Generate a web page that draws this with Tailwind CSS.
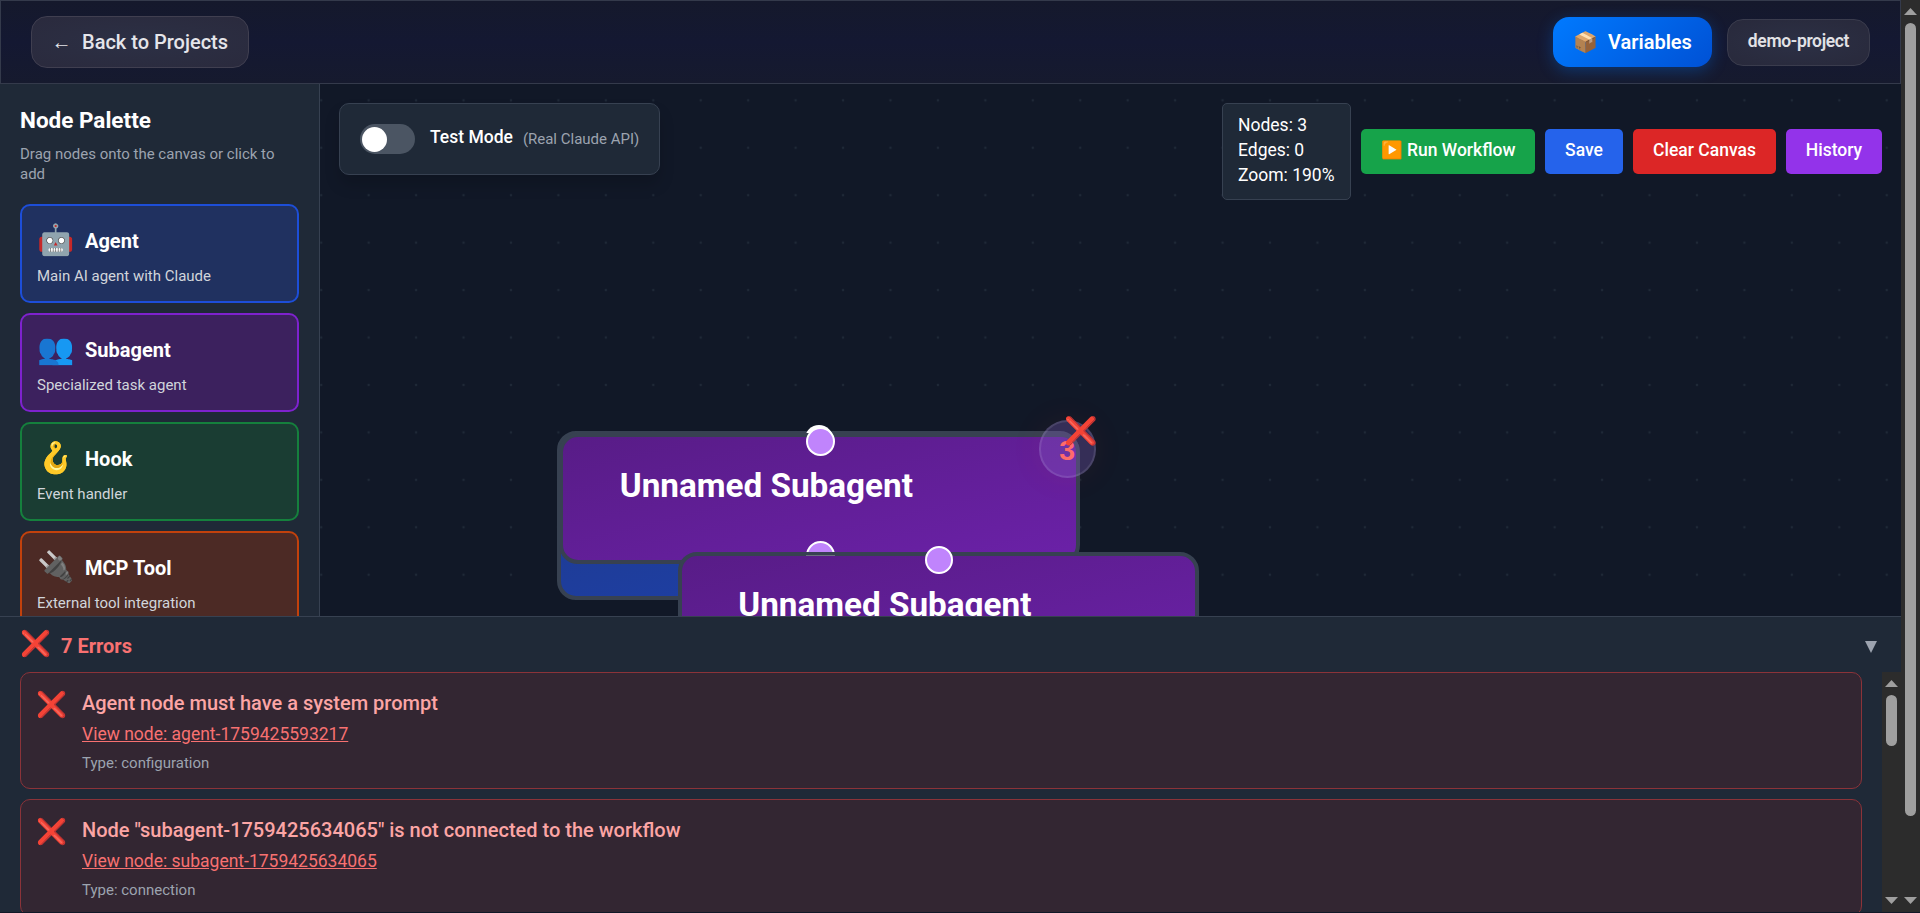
<!DOCTYPE html>
<html lang="en">
<head>
<meta charset="utf-8">
<title>Workflow Editor</title>
<script src="https://cdn.jsdelivr.net/npm/@tailwindcss/browser@4"></script>
</head>
<body class="h-[913px] w-[1920px] overflow-hidden bg-[#111827] font-['Roboto',sans-serif] text-white">
<div class="flex h-full">
  <div class="flex h-[912px] w-[1901px] shrink-0 flex-col">
    <header class="flex h-[84px] shrink-0 items-center justify-between border border-[#343a4b] bg-linear-to-b from-[#15192c] via-[#141832] to-[#161a2e] px-[30px]">
      <button class="flex h-[52px] w-[218px] items-center gap-2.5 rounded-2xl border border-[#403f50] bg-radial from-[#2c3045] to-[#2a2a3d] pl-5 text-xl font-medium text-[#e5e5ea]"><span class="-ml-px w-[21px] text-[20px]">←</span><span>Back to Projects</span></button>
      <div class="flex items-center gap-[15px]">
        <button class="flex h-[50px] w-[159px] items-center gap-2.5 rounded-2xl bg-linear-135 from-[#007aff] to-[#0051d5] pl-5 text-xl font-semibold shadow-[0_4px_16px_rgba(0,122,255,0.3)]"><span class="text-[20px]">📦</span><span>Variables</span></button>
        <div class="flex h-[47px] w-[143px] items-center justify-center rounded-2xl border border-[#3a3c4d] bg-radial from-[#2c3045] to-[#28293b] pb-0.5 text-[17.5px] font-semibold tracking-[-0.35px] text-[#e2e2e6]">demo-project</div>
      </div>
    </header>
    <div class="flex h-[532px] shrink-0 overflow-hidden">
      <aside class="w-80 shrink-0 border-r border-[#374151] bg-[#1f2937] px-5 pt-5">
        <h2 class="text-[22.5px] leading-[33px] font-bold">Node Palette</h2>
        <p class="mt-[7px] mb-5 text-[15px] leading-5 text-[#9ca3af]">Drag nodes onto the canvas or click to add</p>
        <div class="flex flex-col gap-2.5">
          <div class="h-[99px] rounded-[10px] border-2 border-[#1d4ed8] bg-[#203160] px-[15px] pt-[14px]"><div class="flex h-10 items-center gap-[11px]"><span class="pb-0.5 text-[30px]">🤖</span><b class="pt-0.5 text-xl">Agent</b></div><p class="mt-[6px] text-[15px] leading-5 text-[#d1d5db]">Main AI agent with Claude</p></div>
          <div class="h-[99px] rounded-[10px] border-2 border-[#7e22ce] bg-[#3c215e] px-[15px] pt-[14px]"><div class="flex h-10 items-center gap-[11px]"><span class="pb-0.5 text-[30px]">👥</span><b class="pt-0.5 text-xl">Subagent</b></div><p class="mt-[6px] text-[15px] leading-5 text-[#d1d5db]">Specialized task agent</p></div>
          <div class="h-[99px] rounded-[10px] border-2 border-[#15803d] bg-[#1a3d33] px-[15px] pt-[14px]"><div class="flex h-10 items-center gap-[11px]"><span class="pb-0.5 text-[30px]">🪝</span><b class="pt-0.5 text-xl">Hook</b></div><p class="mt-[6px] text-[15px] leading-5 text-[#d1d5db]">Event handler</p></div>
          <div class="h-[99px] rounded-[10px] border-2 border-[#c2410c] bg-[#4c2a25] px-[15px] pt-[14px]"><div class="flex h-10 items-center gap-[11px]"><span class="pb-0.5 text-[30px]">🔌</span><b class="pt-0.5 text-xl">MCP Tool</b></div><p class="mt-[6px] text-[15px] leading-5 text-[#d1d5db]">External tool integration</p></div>
        </div>
      </aside>
      <main class="relative grow overflow-hidden bg-[#111827]">
        <svg class="absolute inset-0 h-full w-full"><defs><pattern id="dots" x="-22.5" y="-7.4" width="47.44" height="47.44" patternUnits="userSpaceOnUse"><circle cx="23.72" cy="23.72" r="1.2" fill="#1f2937"/></pattern></defs><rect width="100%" height="100%" fill="url(#dots)"/></svg>
        <!-- canvas nodes -->
        <div class="absolute top-[347.4px] left-[237.4px] h-[169px] w-[521.2px] rounded-[19px] border-4 border-[#374151] bg-linear-to-br from-[#1e3a8a] to-[#1e40af]"></div>
        <div class="absolute top-[341px] left-[484.7px] size-[28.6px] rounded-full bg-white"></div>
        <div class="absolute top-[348.8px] left-[239px] h-[131px] w-[521.2px] rounded-[19px] border-4 border-[#374151] bg-linear-to-br from-[#581c87] to-[#6b21a8] pt-[28.4px] pl-[56.8px] text-[33.25px] leading-[42px] font-bold">Unnamed Subagent</div>
        <div class="absolute top-[343px] left-[486.2px] size-[28.6px] rounded-full border-2 border-white bg-[#c084fc]"></div>
        <div class="absolute top-[457px] left-[486.2px] size-[28.6px] rounded-full border-2 border-white bg-[#c084fc]"></div>
        <div class="absolute top-[467.7px] left-[357.5px] h-[131px] w-[521.2px] rounded-[19px] border-4 border-[#374151] bg-linear-to-br from-[#581c87] to-[#6b21a8] pt-[28.4px] pl-[56.8px] text-[33.25px] leading-[42px] font-bold">Unnamed Subagent</div>
        <div class="absolute top-[471px] left-[486.2px] h-px w-[28.6px] bg-white/25"></div>
        <div class="absolute top-[461.7px] left-[604.7px] size-[28.6px] rounded-full border-2 border-white bg-[#c084fc]"></div>
        <div class="absolute top-[336px] left-[719px] flex h-[58px] w-[56.5px] items-center justify-center rounded-full border-2 border-white/10 bg-[#8c64c8]/30 pt-0.5 font-['Liberation_Sans',sans-serif] text-[28.5px] font-bold text-[#ff6b6b] shadow-[0_0_34px_rgba(255,59,48,0.07)]">3</div>
        <div class="absolute top-[329px] left-[743.5px] text-[27px] leading-9">❌</div>
        <!-- canvas toolbar -->
        <div class="absolute top-[19px] left-[19px] flex h-[72px] w-[321px] items-center rounded-[10px] border border-[#374151] bg-[#1f2937] pl-5 shadow-[0_10px_15px_rgba(0,0,0,0.15)]">
          <div class="h-[30px] w-[55px] rounded-full bg-[#4b5563] px-[2px] py-[2.5px]"><div class="size-[25px] rounded-full bg-white"></div></div>
          <span class="ml-[15px] pb-[3px] text-[17.5px] font-medium">Test Mode</span><span class="ml-2.5 text-[15px] text-[#9ca3af]">(Real Claude API)</span>
        </div>
        <div class="absolute top-[19px] right-[19px] flex items-center gap-2.5 text-[17.5px] font-medium">
          <div class="h-[97px] w-[129px] rounded-[5px] border border-[#374151] bg-[#1f2937] px-[15px] pt-[9px] leading-[25px] font-normal"><p>Nodes: 3</p><p>Edges: 0</p><p>Zoom: 190%</p></div>
          <button class="h-[45px] w-[174px] rounded-[5px] bg-[#16a34a] pb-0.5">▶️ Run Workflow</button>
          <button class="h-[45px] w-[78px] rounded-[5px] bg-[#2563eb] pb-0.5">Save</button>
          <button class="h-[45px] w-[143px] rounded-[5px] bg-[#dc2626] pb-0.5">Clear Canvas</button>
          <button class="h-[45px] w-24 rounded-[5px] bg-[#9333ea] pb-0.5">History</button>
        </div>
      </main>
    </div>
    <section class="flex min-h-0 grow flex-col border-t border-[#374151] bg-[#1f2937]">
      <div class="flex h-[55px] shrink-0 items-center justify-between pr-6 pl-5">
        <div class="flex items-center gap-2.5"><span class="pb-0.5 text-[25px]">❌</span><span class="pt-0.5 text-xl font-bold text-[#f87171]">7 Errors</span></div>
        <svg class="mt-1 h-3 w-3" viewBox="0 0 12 12"><path d="M0 0h12L6 12z" fill="#9ca3af"/></svg>
      </div>
      <div class="flex min-h-0 grow">
        <div class="flex grow flex-col gap-2.5 overflow-hidden pr-5 pl-5">
          <div class="flex h-[117px] shrink-0 gap-[15px] rounded-[10px] border border-[#8b3339] bg-[#332632] px-[15px] pt-[15px]"><span class="text-[25px] leading-[34px]">❌</span><div><p class="text-xl leading-[30px] font-medium text-[#fca5a5]">Agent node must have a system prompt</p><p class="mt-1 text-[17.5px] leading-[25px] text-[#f87171] underline">View node: agent-1759425593217</p><p class="mt-[6px] text-[15px] leading-5 text-[#9ca3af]">Type: configuration</p></div></div>
          <div class="flex h-[117px] shrink-0 gap-[15px] rounded-[10px] border border-[#8b3339] bg-[#332632] px-[15px] pt-[15px]"><span class="text-[25px] leading-[34px]">❌</span><div><p class="text-xl leading-[30px] font-medium text-[#fca5a5]">Node "subagent-1759425634065" is not connected to the workflow</p><p class="mt-1 text-[17.5px] leading-[25px] text-[#f87171] underline">View node: subagent-1759425634065</p><p class="mt-[6px] text-[15px] leading-5 text-[#9ca3af]">Type: connection</p></div></div>
        </div>
        <div class="flex w-[19px] shrink-0 flex-col items-center bg-[#2c2c2c] pt-2 pb-2">
          <svg class="h-[7px] w-[13px]" viewBox="0 0 13 7"><path d="M0 7h13L6.5 0z" fill="#9f9f9f"/></svg>
          <div class="mt-2 h-[51px] w-[11px] rounded-full bg-[#9f9f9f]"></div>
          <svg class="mt-auto h-[7px] w-[13px]" viewBox="0 0 13 7"><path d="M0 0h13L6.5 7z" fill="#9f9f9f"/></svg>
        </div>
      </div>
    </section>
  </div>
  <div class="flex h-[912px] w-[19px] shrink-0 flex-col items-center bg-[#2c2c2c] pt-2 pb-2">
    <svg class="h-[7px] w-[13px]" viewBox="0 0 13 7"><path d="M0 7h13L6.5 0z" fill="#9f9f9f"/></svg>
    <div class="mt-2 h-[793px] w-[11px] rounded-full bg-[#9f9f9f]"></div>
    <svg class="mt-auto h-[7px] w-[13px]" viewBox="0 0 13 7"><path d="M0 0h13L6.5 7z" fill="#9f9f9f"/></svg>
  </div>
</div>
</body>
</html>
